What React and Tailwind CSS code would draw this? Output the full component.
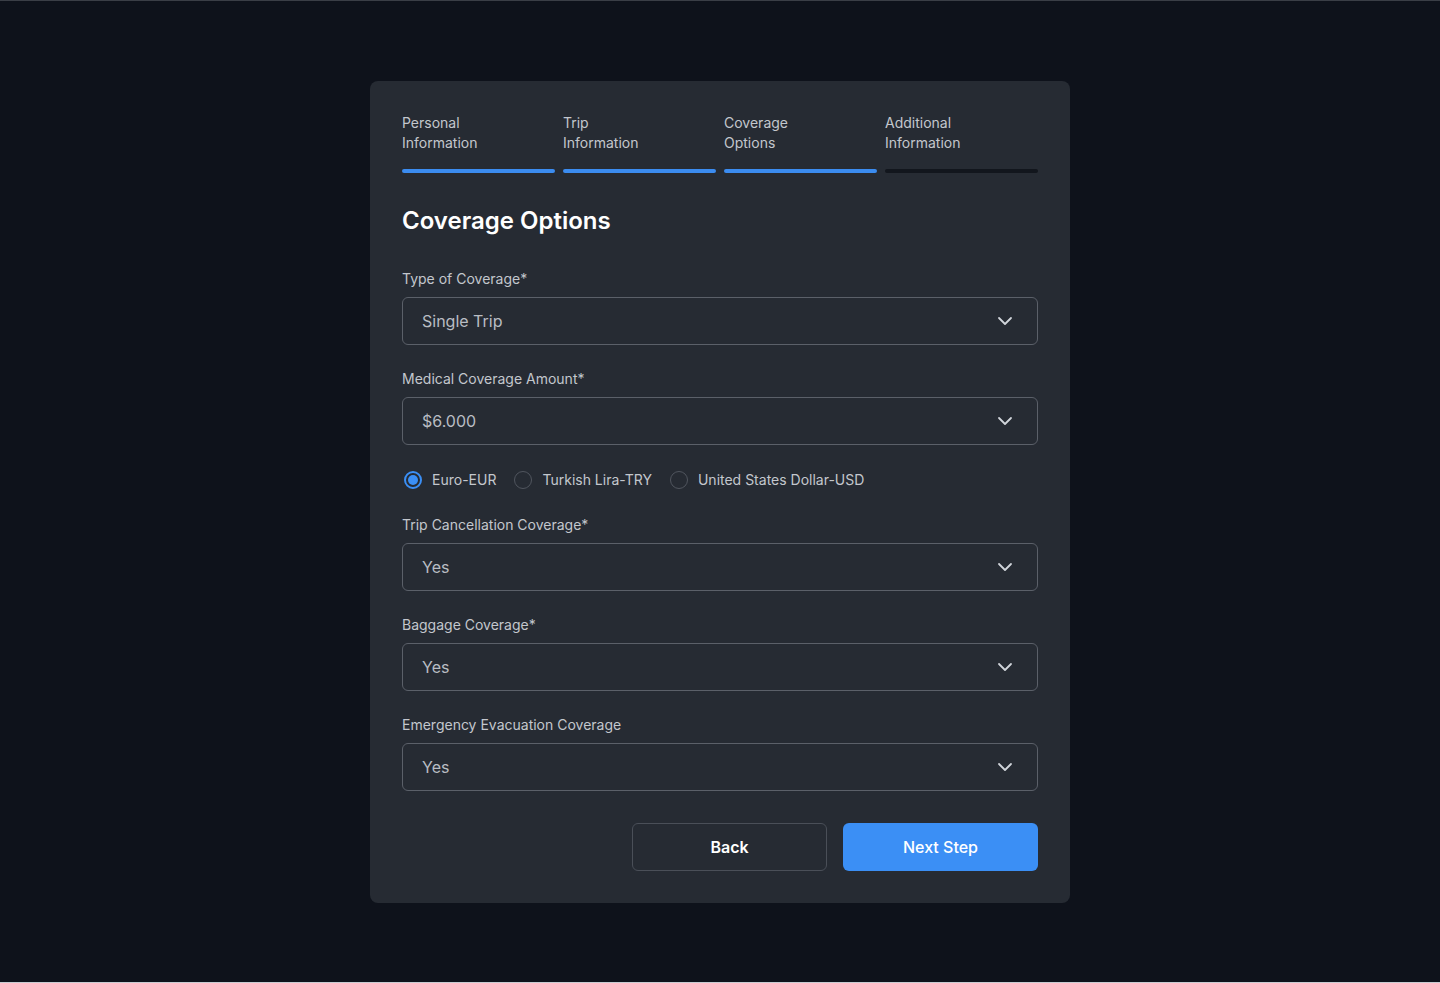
import React from "react";

const Chevron = () => (
  <svg width="24" height="24" viewBox="0 0 24 24" fill="none" stroke="#d1d5db" strokeWidth="1.8" strokeLinecap="round" strokeLinejoin="round">
    <path d="M6 9l6 6 6-6" />
  </svg>
);

const Select = ({ label, value }) => (
  <div className="flex flex-col gap-2">
    <label className="text-sm leading-5 text-[#c3c7cd]">{label}</label>
    <div className="flex h-12 items-center justify-between rounded-md border border-[#5b6069] bg-[#262b33] pl-[19px] pr-5">
      <span className="text-base text-[#b9bdc3]">{value}</span>
      <Chevron />
    </div>
  </div>
);

const Radio = ({ label, checked }) => (
  <div className="flex items-center gap-[10px]">
    {checked ? (
      <span className="ml-[2px] flex h-[18px] w-[18px] items-center justify-center rounded-full border-2 border-[#3b8ff5]">
        <span className="h-[10px] w-[10px] rounded-full bg-[#3b8ff5]" />
      </span>
    ) : (
      <span className="ml-[2px] h-[18px] w-[18px] rounded-full border-[1.5px] border-[#50555e]" />
    )}
    <span className="text-sm leading-5 text-[#c3c7cd]">{label}</span>
  </div>
);

export default function App() {
  const steps = [
    ["Personal", "Information", true],
    ["Trip", "Information", true],
    ["Coverage", "Options", true],
    ["Additional", "Information", false],
  ];
  return (
    <div
      className="flex h-[983px] w-full items-center justify-center border-t border-b border-t-[#3a3e46] border-b-[#c9ccd2] bg-[#0e121b]"
      style={{ fontFamily: "Inter, 'Noto Sans', sans-serif" }}
    >
      <div className="flex w-[700px] flex-col rounded-lg bg-[#262b33] p-8">
        <div className="grid grid-cols-4 gap-2">
          {steps.map(([a, b, active]) => (
            <div key={a} className="flex flex-col gap-4">
              <div className="text-sm leading-5 text-[#c3c7cd]">
                <div>{a}</div>
                <div>{b}</div>
              </div>
              <div className={`h-1 rounded-sm ${active ? "bg-[#3b8cf0]" : "bg-[#12161d]"}`} />
            </div>
          ))}
        </div>
        <h1 className="mt-8 text-2xl font-semibold leading-8 text-white">Coverage Options</h1>
        <div className="mt-8 flex flex-col gap-6">
          <Select label="Type of Coverage*" value="Single Trip" />
          <Select label="Medical Coverage Amount*" value="$6.000" />
          <div className="flex h-[22px] items-center gap-4">
            <Radio label="Euro-EUR" checked />
            <Radio label="Turkish Lira-TRY" />
            <Radio label="United States Dollar-USD" />
          </div>
          <Select label="Trip Cancellation Coverage*" value="Yes" />
          <Select label="Baggage Coverage*" value="Yes" />
          <Select label="Emergency Evacuation Coverage" value="Yes" />
        </div>
        <div className="mt-8 flex justify-end gap-4">
          <button className="h-12 w-[195px] rounded-md border border-[#4a4f58] bg-[#262b33] text-base font-semibold text-white">
            Back
          </button>
          <button className="h-12 w-[195px] rounded-md bg-[#3b8ff5] text-base font-medium text-white">
            Next Step
          </button>
        </div>
      </div>
    </div>
  );
}
